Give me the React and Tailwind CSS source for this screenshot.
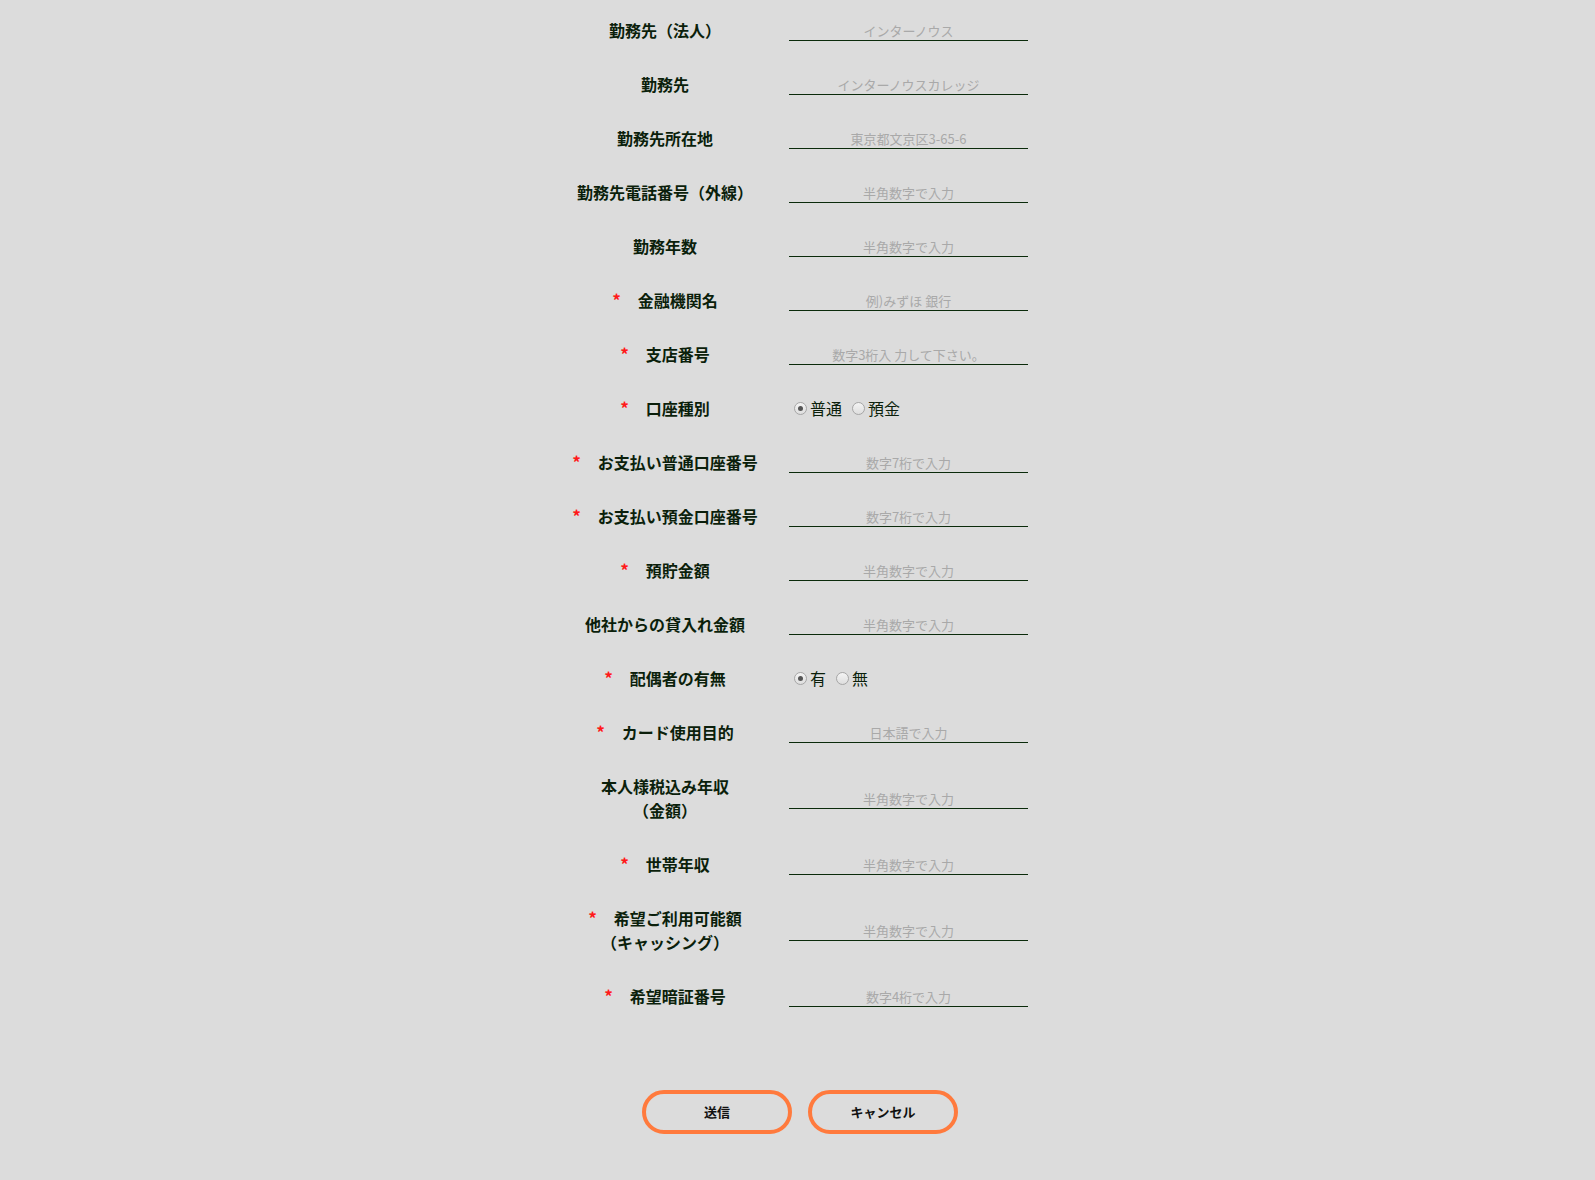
const ROWS = [
  { label: '勤務先（法人）', placeholder: 'インターノウス' },
  { label: '勤務先', placeholder: 'インターノウスカレッジ' },
  { label: '勤務先所在地', placeholder: '東京都文京区3-65-6' },
  { label: '勤務先電話番号（外線）', placeholder: '半角数字で入力' },
  { label: '勤務年数', placeholder: '半角数字で入力' },
  { label: '金融機関名', required: true, placeholder: '例)みずほ 銀行' },
  { label: '支店番号', required: true, placeholder: '数字3桁入 力して下さい。' },
  { label: '口座種別', required: true, radio: ['普通', '預金'] },
  { label: 'お支払い普通口座番号', required: true, placeholder: '数字7桁で入力' },
  { label: 'お支払い預金口座番号', required: true, placeholder: '数字7桁で入力' },
  { label: '預貯金額', required: true, placeholder: '半角数字で入力' },
  { label: '他社からの貸入れ金額', placeholder: '半角数字で入力' },
  { label: '配偶者の有無', required: true, radio: ['有', '無'] },
  { label: 'カード使用目的', required: true, placeholder: '日本語で入力' },
  { label: '本人様税込み年収', second: '（金額）', placeholder: '半角数字で入力' },
  { label: '世帯年収', required: true, placeholder: '半角数字で入力' },
  { label: '希望ご利用可能額', second: '（キャッシング）', required: true, placeholder: '半角数字で入力' },
  { label: '希望暗証番号', required: true, placeholder: '数字4桁で入力' },
]

function Radio({ checked }) {
  return (
    <span className="inline-flex items-center justify-center w-[13px] h-[13px] rounded-full border border-[#a6a6a6] bg-gradient-to-b from-[#f4f4f4] to-[#dedede]">
      {checked && <span className="w-[5px] h-[5px] rounded-full bg-[#555]" />}
    </span>
  )
}

function Label({ row }) {
  return (
    <div className="w-[248px] pb-[2px] text-center text-[16px] leading-[24px] font-bold text-[#0b1f0b]">
      <div>
        {row.required && <span className="text-[#ff1a1a] text-[17px] mr-[17px]">*</span>}
        {row.label}
      </div>
      {row.second && <div>{row.second}</div>}
    </div>
  )
}

export default function App() {
  return (
    <div className="min-h-[1180px] bg-[#dcdcdc] pt-[4px] font-['Noto_Sans_CJK_JP','Noto_Sans',sans-serif]">
      <div className="w-[513px] mx-auto">
        {ROWS.map((row, i) => (
          <div key={i} className={`flex items-center ${row.second ? 'h-[78px]' : 'h-[54px]'}`}>
            <Label row={row} />
            <div className="w-[265px]">
              {row.radio ? (
                <div className="flex items-center pl-[5px] pb-[2px] text-[16px] leading-[24px] text-[#0b1f0b]">
                  <Radio checked />
                  <span className="ml-[3px] mr-[10px]">{row.radio[0]}</span>
                  <Radio />
                  <span className="ml-[3px]">{row.radio[1]}</span>
                </div>
              ) : (
                <input
                  type="text"
                  placeholder={row.placeholder}
                  className="block w-[239px] h-[20px] bg-transparent border-b border-[#0b2b0b] text-center text-[13px] leading-[20px] outline-none placeholder:text-[#a9a9a9]"
                />
              )}
            </div>
          </div>
        ))}
      </div>

      <div className="flex justify-center gap-4 mt-[66px] pl-[5px]">
        <button className="w-[150px] h-[44px] rounded-[22px] border-4 border-[#ff7a3d] bg-transparent text-[13px] font-bold text-[#111]">
          送信
        </button>
        <button className="w-[150px] h-[44px] rounded-[22px] border-4 border-[#ff7a3d] bg-transparent text-[13px] font-bold text-[#111]">
          キャンセル
        </button>
      </div>
    </div>
  )
}
